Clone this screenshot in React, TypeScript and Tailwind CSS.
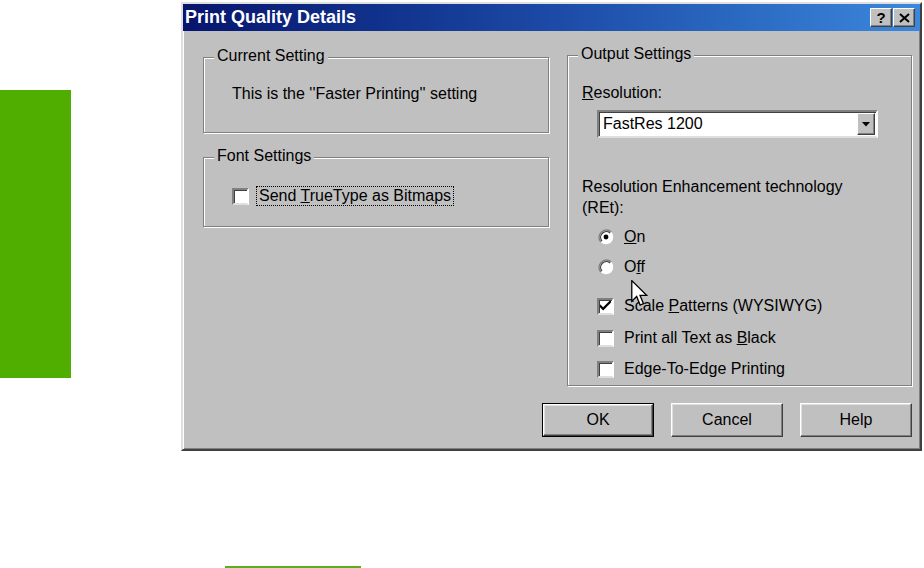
import React from 'react'

// ─── Classic widgets ───────────────────────────────────────────────────────────

function GroupBox({ label, className, children }: { label: string; className: string; children?: React.ReactNode }) {
  return (
    <div className={`relative border border-[#808080] shadow-[inset_1px_1px_0_#fff,1px_1px_0_#fff] ${className}`}>
      <span className="absolute left-[10px] -top-[11px] bg-[#c0c0c0] px-[3px] leading-[18px]">{label}</span>
      {children}
    </div>
  )
}

function CheckBox({ checked = false }: { checked?: boolean }) {
  return (
    <span className="flex h-[17px] w-[17px] shrink-0 items-center justify-center border-2 border-t-[#808080] border-l-[#808080] border-r-white border-b-[#dfdfdf] bg-white shadow-[inset_1px_1px_0_#404040]">
      {checked && (
        <svg width="11" height="11" viewBox="0 0 7 7">
          <path d="M0 2 L0 4 L2 6 L7 1 L7 -1 L2 4 Z" fill="#000" />
        </svg>
      )}
    </span>
  )
}

function Radio({ checked = false }: { checked?: boolean }) {
  return (
    <svg width="16" height="16" viewBox="0 0 15 15" className="shrink-0">
      <circle cx="7.5" cy="7.5" r="6.8" fill="#fff" />
      <path d="M2.7 12.3 A6.8 6.8 0 0 1 12.3 2.7" stroke="#808080" strokeWidth="1.4" fill="none" />
      <path d="M3.7 11.3 A5.4 5.4 0 0 1 11.3 3.7" stroke="#404040" strokeWidth="1.2" fill="none" />
      {checked && <circle cx="7.5" cy="7.5" r="2.3" fill="#000" />}
    </svg>
  )
}

function Button({ label, isDefault = false }: { label: string; isDefault?: boolean }) {
  const inner = (
    <div className="flex h-full w-full items-center justify-center border border-t-white border-l-white border-r-[#404040] border-b-[#404040] bg-[#c0c0c0] shadow-[inset_-1px_-1px_0_#808080,inset_1px_1px_0_#dfdfdf]">
      {label}
    </div>
  )
  if (isDefault) {
    return <div className="h-[34px] w-[112px] border border-black">{inner}</div>
  }
  return <div className="h-[34px] w-[112px]">{inner}</div>
}

function TitleButton({ children }: { children: React.ReactNode }) {
  return (
    <div className="flex h-[19px] w-[22px] items-center justify-center border border-t-white border-l-white border-r-[#404040] border-b-[#404040] bg-[#c0c0c0] shadow-[inset_-1px_-1px_0_#808080] text-[15px] font-bold leading-none text-black">
      {children}
    </div>
  )
}

// ─── Dialog ────────────────────────────────────────────────────────────────────

function PrintQualityDialog() {
  return (
    <div className="ml-[110px] mt-[2px] flex h-[449px] w-[741px] flex-col border-2 border-t-[#dfdfdf] border-l-[#dfdfdf] border-r-[#404040] border-b-[#404040] bg-[#c0c0c0] shadow-[inset_1px_1px_0_#fff,inset_-1px_-1px_0_#808080]">
      {/* Title bar */}
      <div className="flex h-[27px] items-center justify-between bg-gradient-to-r from-[#08146e] via-[#1c4aa6] to-[#3c88dc] pl-[2px] pr-[5px]">
        <span className="text-[18px] font-bold text-white">Print Quality Details</span>
        <div className="flex gap-[1px]">
          <TitleButton>?</TitleButton>
          <TitleButton>
            <svg width="11" height="10" viewBox="0 0 11 10">
              <path d="M1 1 L10 9 M10 1 L1 9" stroke="#000" strokeWidth="2" />
            </svg>
          </TitleButton>
        </div>
      </div>

      {/* Body */}
      <div className="flex flex-1 flex-col pl-[20px] pr-[8px]">
        <div className="flex gap-[18px]">
          {/* Left column */}
          <div className="mt-[26px] flex w-[346px] flex-col gap-[24px]">
            <GroupBox label="Current Setting" className="h-[76px] pl-[28px] pt-[27px]">
              <p className="leading-[18px]">This is the ''Faster Printing'' setting</p>
            </GroupBox>
            <GroupBox label="Font Settings" className="h-[70px] pl-[28px] pt-[29px]">
              <div className="flex items-center gap-[8px]">
                <CheckBox />
                <span className="px-[2px] leading-[18px] outline-1 outline-dotted outline-black">
                  Send <u>T</u>rueType as Bitmaps
                </span>
              </div>
            </GroupBox>
          </div>

          {/* Right column */}
          <GroupBox label="Output Settings" className="mt-[24px] flex h-[331px] w-[345px] flex-col pl-[14px] pt-[28px]">
            <p className="leading-[18px]">
              <u>R</u>esolution:
            </p>
            <div className="ml-[15px] mt-[8px] flex h-[28px] w-[281px] items-center justify-between border-2 border-t-[#808080] border-l-[#808080] border-r-white border-b-[#dfdfdf] bg-white pl-[4px] pr-[1px] shadow-[inset_1px_1px_0_#404040]">
              <span>FastRes 1200</span>
              <div className="flex h-[22px] w-[18px] items-center justify-center border border-t-white border-l-white border-r-[#404040] border-b-[#404040] bg-[#c0c0c0] shadow-[inset_-1px_-1px_0_#808080]">
                <svg width="8" height="5" viewBox="0 0 8 5">
                  <path d="M0 0 L8 0 L4 4.5 Z" fill="#000" />
                </svg>
              </div>
            </div>
            <p className="mt-[38px] leading-[21px]">
              Resolution Enhancement technology
              <br />
              (REt):
            </p>
            <div className="ml-[16px] mt-[8px] flex h-[22px] items-center gap-[10px]">
              <Radio checked />
              <span>
                <u>O</u>n
              </span>
            </div>
            <div className="ml-[16px] mt-[8px] flex h-[22px] items-center gap-[10px]">
              <Radio />
              <span>
                O<u>f</u>f
              </span>
            </div>
            <div className="ml-[15px] mt-[17px] flex h-[22px] items-center gap-[10px]">
              <CheckBox checked />
              <span>
                Scale <u>P</u>atterns (WYSIWYG)
              </span>
            </div>
            <div className="ml-[15px] mt-[10px] flex h-[22px] items-center gap-[10px]">
              <CheckBox />
              <span>
                Print all Text as <u>B</u>lack
              </span>
            </div>
            <div className="ml-[15px] mt-[9px] flex h-[22px] items-center gap-[10px]">
              <CheckBox />
              <span>Edge-To-Edge Printing</span>
            </div>

            {/* Mouse pointer */}
            <svg width="17" height="27" viewBox="0 0 13 21" className="absolute left-[63px] top-[224px]">
              <path d="M0.5 0.5 L0.5 16.5 L4.3 12.8 L7 19.5 L9.6 18.4 L6.9 11.9 L12 11.9 Z" fill="#fff" stroke="#000" strokeWidth="1" strokeLinejoin="miter" />
            </svg>
          </GroupBox>
        </div>

        {/* Buttons */}
        <div className="mt-[17px] flex justify-end gap-[17px]">
          <Button label="OK" isDefault />
          <Button label="Cancel" />
          <Button label="Help" />
        </div>
      </div>
    </div>
  )
}

// ─── Page ──────────────────────────────────────────────────────────────────────

export default function App() {
  return (
    <div className="flex h-[568px] w-[924px] flex-col overflow-hidden bg-white font-['Liberation_Sans',Arial,sans-serif] text-[16px] text-black">
      <div className="flex items-start">
        <div className="mt-[90px] h-[288px] w-[71px] bg-[#50ae00]" />
        <PrintQualityDialog />
      </div>
      <div className="ml-[225px] mt-[115px] h-[2px] w-[136px] bg-[#5aad1c]" />
    </div>
  )
}
